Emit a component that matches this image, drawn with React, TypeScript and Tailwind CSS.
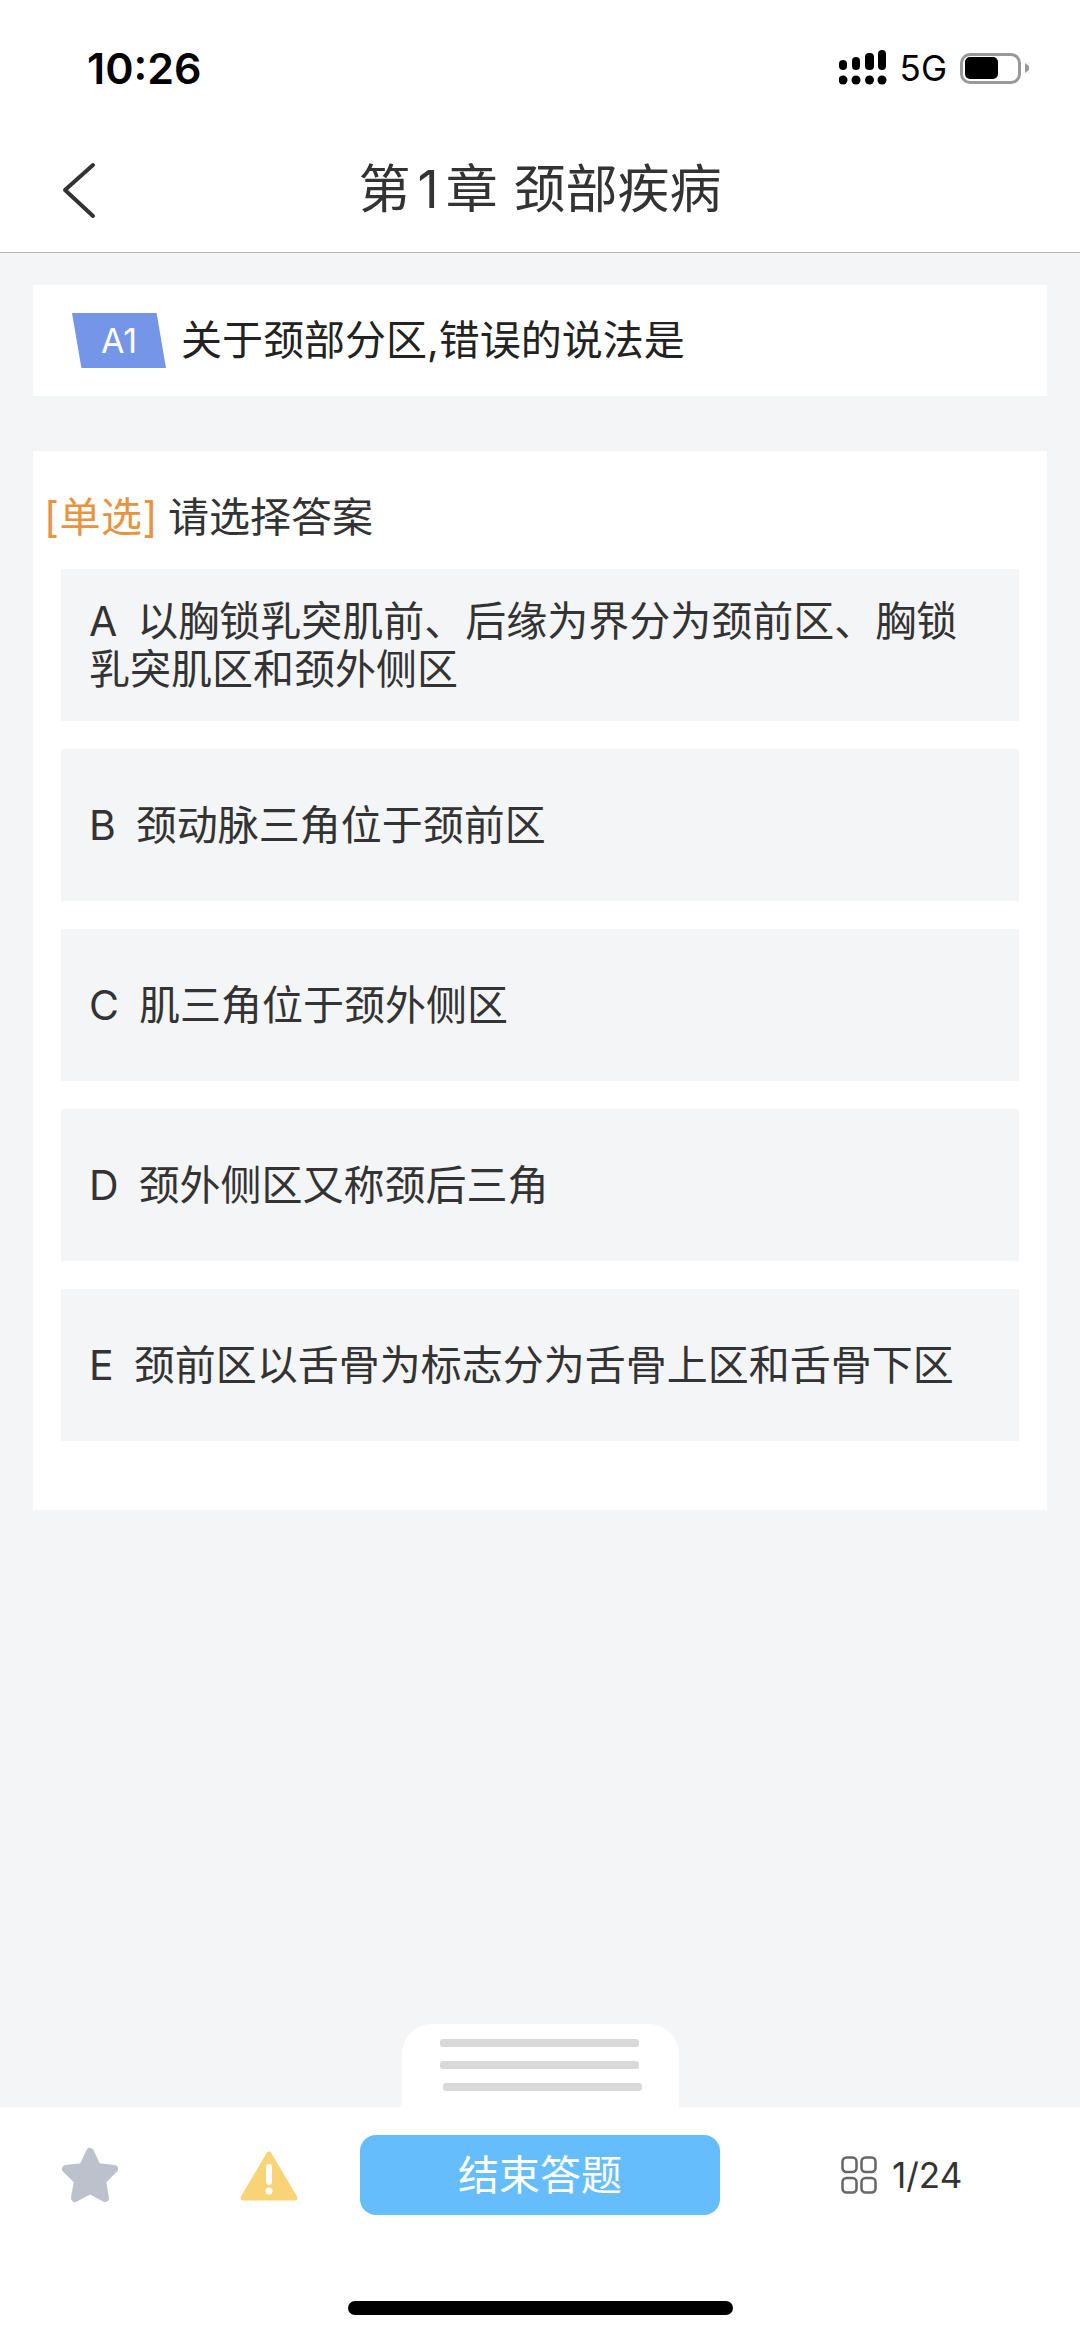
const options = [
  { key: 'A', text: '以胸锁乳突肌前、后缘为界分为颈前区、胸锁乳突肌区和颈外侧区' },
  { key: 'B', text: '颈动脉三角位于颈前区' },
  { key: 'C', text: '肌三角位于颈外侧区' },
  { key: 'D', text: '颈外侧区又称颈后三角' },
  { key: 'E', text: '颈前区以舌骨为标志分为舌骨上区和舌骨下区' },
]

const StatusIcons = () => (
  <div className="flex items-center">
    <svg width="50" height="36" viewBox="0 0 50 36" fill="#000">
      <rect x="0" y="10" width="8" height="10" rx="4" />
      <rect x="13" y="7" width="8" height="13" rx="4" />
      <rect x="26" y="3" width="9" height="17" rx="4" />
      <rect x="39" y="0" width="8" height="20" rx="4" />
      <circle cx="4" cy="30" r="4.5" />
      <circle cx="17" cy="30" r="4.5" />
      <circle cx="30.5" cy="30" r="4.5" />
      <circle cx="43" cy="30" r="4.5" />
    </svg>
    <span className="ml-[11px] text-[35px] leading-none text-black">5G</span>
    <div className="ml-[13px] flex h-[31px] w-[61px] items-center rounded-[10px] border-[3px] border-[#999] pl-[2px]">
      <div className="h-[22px] w-[33px] rounded-[5px] bg-black" />
    </div>
    <svg className="ml-[4px]" width="4" height="10" viewBox="0 0 4 10" fill="#999">
      <path d="M0 0 L4 3 V7 L0 10 Z" />
    </svg>
  </div>
)

export default function App() {
  return (
    <div className="flex h-[2337px] w-[1080px] flex-col overflow-hidden bg-[#f4f5f7] font-['Inter','Noto_Sans_CJK_SC',sans-serif] text-[#333]">
      <header className="h-[253px] shrink-0 border-b border-[#b9b9bd] bg-white">
        <div className="flex h-[136px] items-center justify-between pl-[87px] pr-[51px]">
          <span className="text-[43px] font-semibold leading-none text-black">10:26</span>
          <StatusIcons />
        </div>
        <div className="relative flex h-[108px] items-center justify-center">
          <svg className="absolute left-[60px] top-[24px]" width="38" height="60" viewBox="0 0 38 60" fill="none" stroke="#333" strokeWidth="4" strokeLinecap="round" strokeLinejoin="round">
            <path d="M33 5 L5 30 L33 56" />
          </svg>
          <h1 className="text-[52px] font-normal leading-none">
            第<span className="mx-[7px]">1</span>章<span className="ml-[1px]"> 颈部疾病</span>
          </h1>
        </div>
      </header>

      <main className="flex flex-1 flex-col px-[33px] pt-[32px]">
        <section className="flex h-[111px] items-center bg-white pl-[39px]">
          <span className="flex h-[55px] w-[94px] items-center justify-center bg-[#7596e8] text-[34px] leading-none text-white [clip-path:polygon(0_0,90%_0,100%_100%,10%_100%)]">
            A1
          </span>
          <p className="ml-[15px] text-[41px] leading-none text-[#222]">关于颈部分区,错误的说法是</p>
        </section>

        <section className="mt-[55px] h-[1059px] bg-white pt-[42px]">
          <p className="pl-[11px] text-[41px] leading-[48px]">
            <span className="tracking-[0.5px] text-[#e8933f]">[单选]</span>
            <span className="ml-[10px]">请选择答案</span>
          </p>
          <div className="mt-[28px] flex flex-col gap-[28px] px-[28px]">
            {options.map((o) => (
              <div key={o.key} className="flex h-[152px] items-center bg-[#f4f5f7] pl-[28px] pr-[30px]">
                <p className="text-[41px] leading-[48px]">
                  <span className="mr-[20px]">{o.key}</span>
                  {o.text}
                </p>
              </div>
            ))}
          </div>
        </section>

        <div className="mt-auto flex h-[83px] w-[277px] flex-col gap-[14px] self-center rounded-t-[30px] bg-white pl-[38px] pt-[15px]">
          <div className="h-[8px] w-[199px] rounded-[3px] bg-[#d9d9d9]" />
          <div className="h-[8px] w-[199px] rounded-[3px] bg-[#d9d9d9]" />
          <div className="ml-[3px] h-[8px] w-[199px] rounded-[3px] bg-[#d9d9d9]" />
        </div>
      </main>

      <footer className="h-[230px] shrink-0 bg-white">
        <div className="flex h-[136px] items-center">
          <svg className="ml-[61px]" width="58" height="56" viewBox="0 0 58 56" fill="#bcc1cb" stroke="#bcc1cb" strokeWidth="8" strokeLinejoin="round">
            <path d="M29 5 L36 20 L53 22 L41 34 L44 51 L29 43 L14 51 L17 34 L5 22 L22 20 Z" />
          </svg>
          <svg className="ml-[121px]" width="58" height="51" viewBox="0 0 58 51">
            <path d="M29 4 L55 48 H3 Z" fill="#f8d476" stroke="#f8d476" strokeWidth="5" strokeLinejoin="round" />
            <rect x="26" y="14" width="6" height="21" rx="3" fill="#fff" />
            <circle cx="29" cy="41" r="3.5" fill="#fff" />
          </svg>
          <button className="ml-[62px] flex h-[80px] w-[360px] items-center justify-center rounded-[16px] bg-[#66bdfb] text-[41px] leading-none text-white">
            结束答题
          </button>
          <svg className="ml-[121px]" width="36" height="38" viewBox="0 0 36 38" fill="none" stroke="#666" strokeWidth="2.5">
            <rect x="1.5" y="1.5" width="14" height="14.5" rx="4" />
            <rect x="20.5" y="1.5" width="14" height="14.5" rx="4" />
            <rect x="1.5" y="22" width="14" height="14.5" rx="4" />
            <rect x="20.5" y="22" width="14" height="14.5" rx="4" />
          </svg>
          <span className="ml-[15px] text-[35px] leading-none">1/24</span>
        </div>
        <div className="mx-auto mt-[58px] h-[14px] w-[385px] rounded-full bg-black" />
      </footer>
    </div>
  )
}
